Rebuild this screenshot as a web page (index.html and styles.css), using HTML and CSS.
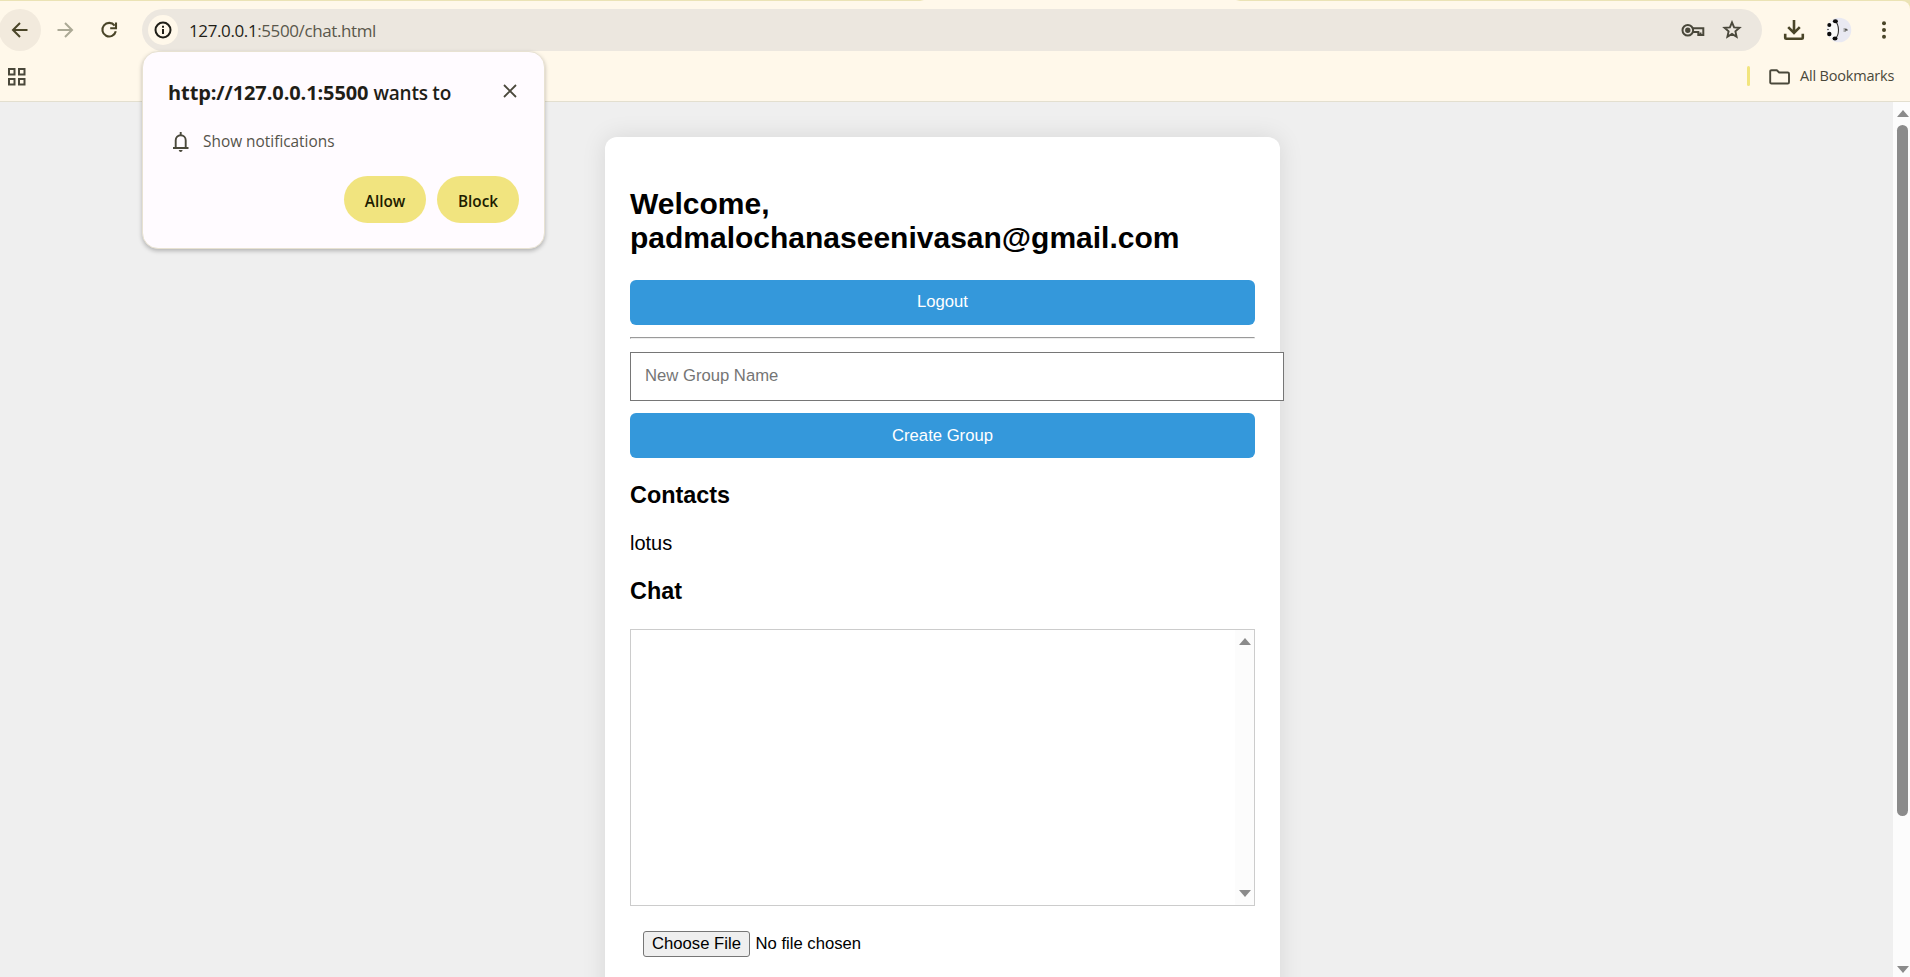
FILE: index.html
```html
<!DOCTYPE html>
<html lang="en">
<head>
<meta charset="utf-8">
<title>Chat</title>
<link rel="stylesheet" href="styles.css">
</head>
<body>
<div class="window">
  <header class="chrome">
    <div class="toolbar">
      <div class="nav">
        <span class="nav-btn active"><svg width="20" height="20" viewBox="0 0 20 20" fill="none" stroke="#4a4528" stroke-width="2"><path d="M17.5 10H3.5M10 3L3 10l7 7"/></svg></span>
        <span class="nav-btn"><svg width="20" height="20" viewBox="0 0 20 20" fill="none" stroke="#aba995" stroke-width="2"><path d="M2.5 10h14M10 3l7 7-7 7"/></svg></span>
        <span class="nav-btn"><svg width="20" height="20" viewBox="0 0 20 20" fill="none" stroke="#4a4528" stroke-width="2.1"><path d="M15.6 5.6A6.8 6.8 0 1 0 16.8 11.3M17 2.5v5.8h-5.8"/></svg></span>
      </div>
      <div class="omnibox">
        <span class="site-info"><svg width="18" height="18" viewBox="0 0 18 18" fill="none" stroke="#1f1e17" stroke-width="2"><circle cx="9" cy="9" r="7.5"/><path d="M9 8v5M9 4.8v2"/></svg></span>
        <span class="url"><b>127.0.0.1</b>:5500/chat.html</span>
        <svg class="key" width="24" height="16" viewBox="0 0 24 16" fill="none" stroke="#4a483b" stroke-width="2"><circle cx="6.8" cy="8.3" r="5.3"/><circle cx="6.8" cy="8.3" r="1.7" fill="#4a483b"/><path d="M11.8 6.3H22.3v6.8h-5v-3.2h-5.5M19.5 13v-2.5"/></svg>
        <svg class="star" width="20" height="20" viewBox="0 0 20 20" fill="none" stroke="#4a483b" stroke-width="1.9"><path d="M10 2.4l2.1 5 5.4.4-4.1 3.6 1.2 5.3L10 13.9l-4.6 2.8 1.2-5.3-4.1-3.6 5.4-.4z"/></svg>
      </div>
      <svg class="download" width="22" height="22" viewBox="0 0 22 22" fill="none" stroke="#4a4528" stroke-width="2.6"><path d="M11 1v12.500M5.200 8.200L11 14l5.800-5.800M2.200 14.800v3.800q0 1.200 1.200 1.200h15.200q1.200 0 1.200-1.200v-3.800"/></svg>
      <svg class="avatar" width="26" height="26" viewBox="0 0 26 26"><circle cx="13" cy="13" r="12.3" fill="#e9e9f2"/><path d="M1 12Q2 4 8 3q5 4 5 10t-5 11Q2 20 1 12z" fill="#f8f8f8"/><path d="M9 4q3.500 3 3.500 9T9 22" fill="none" stroke="#333" stroke-width="1.100"/><g fill="#0b0b0b"><ellipse cx="9.400" cy="4.200" rx="2.500" ry="2"/><ellipse cx="9" cy="21.500" rx="2.500" ry="1.900"/><circle cx="3.300" cy="8" r="2"/><circle cx="3.300" cy="17" r="2.200"/><circle cx="2" cy="12.500" r=".7"/></g><path d="M17.500 11h3v1h1.500v2h-2v1h-2.500z" fill="#aaa"/><path d="M19 12h2v1.500h-2z" fill="#555"/></svg>
      <svg class="more" width="6" height="20" viewBox="0 0 6 20" fill="#4a4528"><circle cx="3" cy="3.300" r="2"/><circle cx="3" cy="10" r="2"/><circle cx="3" cy="16.700" r="2"/></svg>
    </div>
    <div class="bookmarks">
      <svg class="apps" width="18" height="18" viewBox="0 0 18 18" fill="none" stroke="#4a483b" stroke-width="2"><path d="M1 1h5.500v5.500H1zM11 1h5.500v5.500H11zM1 11h5.500v5.500H1zM11 11h5.500v5.500H11z"/></svg>
      <div class="all">
        <i class="divider"></i>
        <svg width="22" height="16" viewBox="0 0 22 16" fill="none" stroke="#4a483b" stroke-width="1.900"><path d="M2.500 1.200h5.300l2.400 2.300h8.500q1.300 0 1.300 1.300v8.400q0 1.300-1.300 1.300H2.500q-1.300 0-1.300-1.300V2.500q0-1.300 1.300-1.300z"/></svg>
        <span class="all-label">All Bookmarks</span>
      </div>
    </div>
  </header>
  <div class="viewport">
    <main class="page">
      <section class="card">
        <h2>Welcome, padmalochanaseenivasan@gmail.com</h2>
        <button class="btn">Logout</button>
        <hr>
        <input class="group-name" type="text" placeholder="New Group Name">
        <button class="btn create">Create Group</button>
        <h3>Contacts</h3>
        <div class="contact">lotus</div>
        <h3 class="chat-title">Chat</h3>
        <div class="chat-box">
          <div class="track"><i class="up"></i><i class="down"></i></div>
        </div>
        <div class="file"><span class="choose">Choose File</span><span class="none">No file chosen</span></div>
      </section>
    </main>
    <div class="track page-track"><i class="up"></i><i class="thumb"></i><i class="down"></i></div>
  </div>
  <aside class="prompt">
    <div class="prompt-head">
      <div class="origin"><b>http://127.0.0.1:5500</b> <span class="wants">wants to</span></div>
      <svg width="14" height="14" viewBox="0 0 14 14" stroke="#4a483b" stroke-width="1.800"><path d="M1 1l12 12M13 1L1 13"/></svg>
    </div>
    <div class="perm">
      <svg width="16" height="20" viewBox="0 0 16 20" fill="none" stroke="#4a483b" stroke-width="1.900"><path d="M0 16h15.500M2.700 16V8.200a5 5 0 0 1 10 0V16M7.700 0v3"/><path d="M5.700 18h4q-.5 2-2 2t-2-2z" fill="#4a483b" stroke="none"/></svg>
      <span class="perm-text">Show notifications</span>
    </div>
    <div class="actions"><button>Allow</button><button>Block</button></div>
  </aside>
</div>
</body>
</html>
```
FILE: styles.css
```css
* { box-sizing: border-box; }
body { margin: 0; overflow: hidden; }
.window { position: relative; width: 1910px; height: 977px; display: flex; flex-direction: column; overflow: hidden; background: linear-gradient(90deg, #ebe3b5 920px, #fff8ea 924px, #fff8ea 1236px, #ebe3b5 1240px); font-family: "Open Sans", "Noto Sans", sans-serif; }
svg { display: block; flex: none; }

.chrome { flex: none; height: 101px; margin-top: 1px; background: #fff8ea; border-bottom: 1px solid #e3dfcf; border-radius: 0 8px 0 0; }
.toolbar { height: 50px; padding-top: 8px; display: flex; align-items: center; }
.nav { display: flex; width: 142px; margin-left: -1px; gap: 2.5px; }
.nav-btn { width: 42px; height: 42px; border-radius: 50%; display: grid; place-items: center; }
.nav-btn.active { background: #f2eadd; }
.omnibox { width: 1620px; height: 42px; margin-left: 1px; padding-left: 6px; border-radius: 21px; background: #ece7df; display: flex; align-items: center; }
.site-info { width: 30px; height: 30px; border-radius: 50%; background: #fff8ea; display: grid; place-items: center; }
.url { margin-left: 11px; padding-top: 2px; font-size: 17px; letter-spacing: -0.39px; line-height: 40px; color: #5a574b; white-space: nowrap; }
.url b { font-weight: 400; color: #1f1e17; }
.key { margin-left: auto; }
.star { margin: 0 20px 0 17px; }
.download { margin-left: 21px; }
.avatar { margin-left: 21px; }
.more { margin-left: 29px; }
.bookmarks { height: 50px; padding: 0 17px 0 8px; display: flex; align-items: center; justify-content: space-between; }
.apps { margin-top: 1px; }
.all { display: flex; align-items: center; }
.divider { width: 3px; height: 20px; border-radius: 2px; background: #f2e57e; }
.all svg { margin: 1px 9px 0 19px; }
.all-label { width: 93px; padding-bottom: 2px; font-size: 14.5px; letter-spacing: -0.18px; color: #4a483b; white-space: nowrap; }

.viewport { flex: 1; display: flex; min-height: 0; background: #efefef; }
.page { flex: 1; padding: 35px 0 0 605px; overflow: hidden; font-family: "Liberation Sans", Arial, sans-serif; font-size: 20px; color: #000; }
.card { width: 675px; height: 900px; padding: 25px; background: #fff; border-radius: 12px; box-shadow: 0 0 25px rgba(0, 0, 0, 0.1); }
h2 { margin: 25px 0 25px; height: 68px; font-size: 30px; line-height: 34px; }
.btn { display: block; width: 100%; height: 45px; padding: 0 0 2px; border: 0; border-radius: 6px; background: #3498db; color: #fff; font: 16.67px "Liberation Sans", Arial, sans-serif; }
.btn.create { padding-bottom: 0; }
hr { height: 2px; margin: 12px 0 13px; border: 1px solid; border-color: #9a9a9a #eee #eee #9a9a9a; }
.group-name { display: block; width: 654px; height: 49px; margin-bottom: 12px; padding: 0 14px 1px; border: 1px solid #767676; background: #fff; font: 16.67px "Liberation Sans", Arial, sans-serif; }
.group-name::placeholder { color: #757575; }
h3 { margin: 24px 0 0; font-size: 23.4px; line-height: 27px; }
.contact { margin-top: 23px; line-height: 23px; }
.chat-title { margin-top: 23px; }
.chat-box { height: 277px; margin-top: 24px; border: 1px solid #ccc; display: flex; justify-content: flex-end; }
.track { width: 19px; background: #fcfcfc; display: flex; flex-direction: column; align-items: center; padding: 8px 0 8px; }
.up, .down { border: 6.5px solid transparent; border-top: 0; border-bottom: 7px solid #8b8b8b; }
.down { border-bottom: 0; border-top: 7px solid #8b8b8b; margin-top: auto; }
.page-track { width: 17px; padding: 8px 0 4px 2px; }
.thumb { width: 11px; height: 691px; margin-top: 8px; border-radius: 6px; background: #8b8b8b; }
.file { margin: 25px 0 0 13px; display: flex; align-items: center; font-size: 16.67px; }
.choose { width: 107px; height: 26px; border: 1px solid #767676; border-radius: 3px; background: #efefef; line-height: 23px; text-align: center; }
.none { margin-left: 5.5px; line-height: 24px; padding-bottom: 1px; }

.prompt { position: absolute; left: 142px; top: 51px; width: 403px; height: 198px; padding: 25px 25px 0; border: 1px solid #e8e2d2; border-radius: 16px; background: #fffbff; box-shadow: 0 2px 4px rgba(0, 0, 0, 0.25); color: #1f1e17; }
.prompt-head { display: flex; justify-content: space-between; height: 32px; }
.prompt-head svg { margin: 7px 2px 0 0; }
.origin { font-size: 20px; line-height: 32px; white-space: nowrap; letter-spacing: -0.1px; }
.origin b { font-weight: 700; }
.wants { font-size: 19px; font-weight: 600; letter-spacing: -0.25px; }
.perm { margin: 21px 0 0 5px; display: flex; align-items: center; color: #55534a; }
.perm-text { margin-left: 14px; font-size: 15.4px; line-height: 24px; white-space: nowrap; }
.actions { display: flex; justify-content: flex-end; gap: 11px; margin-top: 22px; }
.actions button { width: 82px; height: 47px; padding: 2px 0 0; border: 0; border-radius: 24px; background: #f1e47f; color: #201c00; font: 600 15.3px "Open Sans", "Noto Sans", sans-serif; }
```
